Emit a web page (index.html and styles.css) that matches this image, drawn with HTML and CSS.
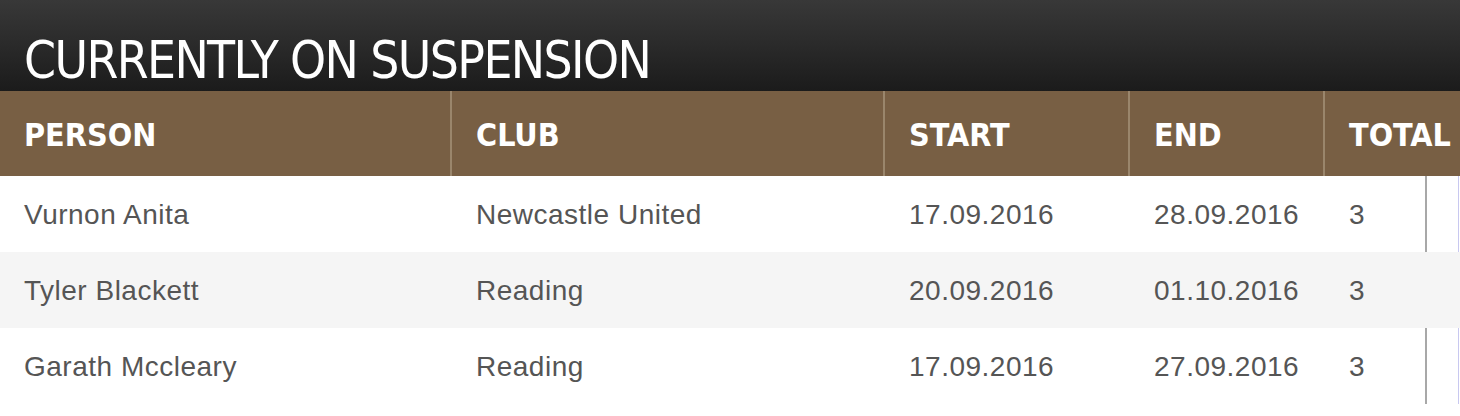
FILE: index.html
```html
<!DOCTYPE html>
<html>
<head>
<meta charset="utf-8">
<link rel="stylesheet" href="styles.css">
</head>
<body>
<section class="panel">
  <h2 class="panel-title">CURRENTLY ON SUSPENSION</h2>
  <table class="susp">
    <thead>
      <tr>
        <th class="c-person">PERSON</th>
        <th class="c-club">CLUB</th>
        <th class="c-start">START</th>
        <th class="c-end">END</th>
        <th class="c-total">TOTAL</th>
      </tr>
    </thead>
    <tbody>
      <tr>
        <td>Vurnon Anita</td>
        <td>Newcastle United</td>
        <td>17.09.2016</td>
        <td>28.09.2016</td>
        <td class="total">3</td>
      </tr>
      <tr class="alt">
        <td>Tyler Blackett</td>
        <td>Reading</td>
        <td>20.09.2016</td>
        <td>01.10.2016</td>
        <td class="total">3</td>
      </tr>
      <tr>
        <td>Garath Mccleary</td>
        <td>Reading</td>
        <td>17.09.2016</td>
        <td>27.09.2016</td>
        <td class="total">3</td>
      </tr>
    </tbody>
  </table>
</section>
</body>
</html>
```
FILE: styles.css
```css
html, body {
  margin: 0;
  padding: 0;
  background: #ffffff;
  overflow: hidden;
}
.panel {
  width: 1500px;
}
.panel-title {
  margin: 0;
  height: 91px;
  box-sizing: border-box;
  padding: 35px 0 0 24px;
  background: linear-gradient(to bottom, #383838 0%, #2a2a2a 50%, #1b1b1b 100%);
  color: #ffffff;
  font-family: "DejaVu Sans Condensed", "DejaVu Sans", sans-serif;
  font-weight: normal;
  font-size: 51px;
  line-height: 52px;
  letter-spacing: -1.6px;
  white-space: nowrap;
}
.susp {
  border-collapse: collapse;
  table-layout: fixed;
  width: 1500px;
}
.susp th {
  height: 85px;
  box-sizing: border-box;
  background: #785f44;
  color: #ffffff;
  text-align: left;
  padding: 3px 0 0 24px;
  font-family: "DejaVu Sans Condensed", "DejaVu Sans", sans-serif;
  font-weight: bold;
  font-size: 32px;
  letter-spacing: 0;
  white-space: nowrap;
  border-left: 2px solid #9a866c;
}
.susp th.c-person { width: 451px; border-left: none; }
.susp th.c-club { width: 433px; }
.susp th.c-start { width: 245px; }
.susp th.c-end { width: 195px; }
.susp td {
  height: 76px;
  box-sizing: border-box;
  padding: 2px 0 0 24px;
  color: #555555;
  font-family: "Liberation Sans", Arial, sans-serif;
  font-size: 28px;
  letter-spacing: 0.5px;
  white-space: nowrap;
  border-left: 2px solid transparent;
}
.susp td:first-child { border-left: none; }
.susp tr.alt td { background: #f5f5f5; }
.susp tr:not(.alt) td.total {
  background-image:
    linear-gradient(to right, transparent 100px, #a8a8a8 100px, #a8a8a8 102px, transparent 102px),
    linear-gradient(to right, transparent 133px, #c8c8f0 133px, #c8c8f0 134px, transparent 134px);
}
```
